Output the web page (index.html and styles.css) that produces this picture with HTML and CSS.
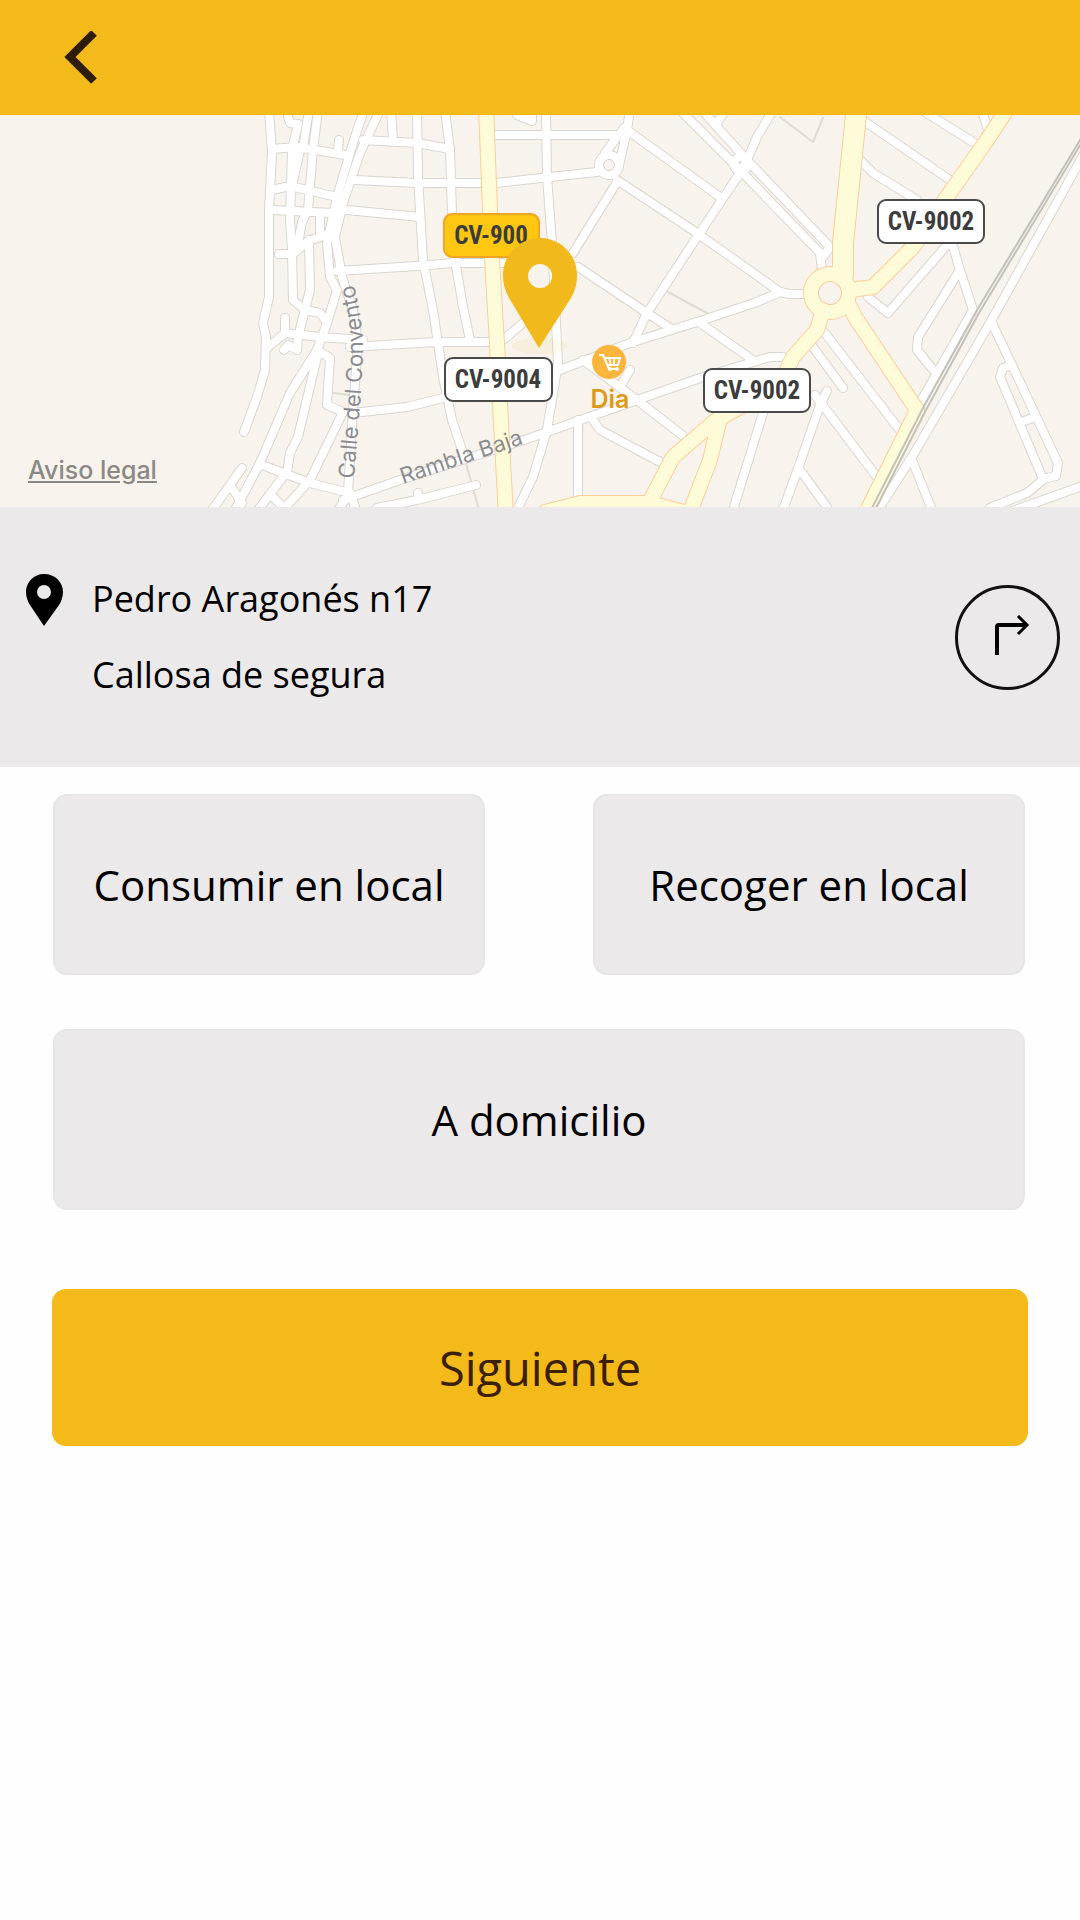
FILE: index.html
```html
<!DOCTYPE html>
<html lang="es">
<head>
<meta charset="utf-8">
<meta name="viewport" content="width=device-width, initial-scale=1">
<title>Pedido</title>
<link rel="stylesheet" href="styles.css">
</head>
<body>
<header class="topbar">
  <button class="back" type="button" aria-label="Volver">
    <svg width="34" height="54" viewBox="0 0 34 54"><path d="M30 2 6 26 30 50" fill="none" stroke="#2e1c05" stroke-width="8"/></svg>
  </button>
</header>
<main>
  <section class="map" aria-label="Mapa">
    <svg class="map-art" viewBox="0 115 1080 392" preserveAspectRatio="xMidYMid slice">
      <defs>
        <g id="streets">
          <path d="M269 110 272 153 269 210V297L263 323 266 337 265 370 257 397 244 432"/>
          <path d="M288 117 290 123 298 124 292 150 290 220 292 250 293 300 305 310 320 313 327 322"/>
          <path d="M309 110 303 148M318 110 313 150 308 210 302 222 298 243M300 150 291 190"/>
          <path d="M272 149 297 147 345 155M338 151 339 140M272 190 290 186 337 197M272 210 333 213M320 213V235"/>
          <path d="M332 233 308 241 293 254H279M309 240 310 290 298 337 297 350"/>
          <path d="M285 318V333M267 348 285 333 320 337 363 340M284 350 288 345 297 350"/>
          <path d="M364 110 353 143 337 197 327 243 330 277 337 290 327 323 317 350 290 393 260 463 235 510"/>
          <path d="M380 110 360 153 343 203 335 237 342 277 353 310 358 343 353 410 348 493"/>
          <path d="M317 357 298 437 290 453 287 473M320 352 330 358 327 405 343 412 310 480 283 510"/>
          <path d="M262 465 310 483 350 493 338 510M350 493 356 510M242 468 210 513M232 488 242 503M283 477 258 510M270 494 284 508"/>
          <path d="M353 413 407 407 447 397M350 347 437 342H497M503 340 523 323"/>
          <path d="M343 500 400 480 530 438 637 400 703 377 750 363 770 357H783"/>
          <path d="M377 508 417 500 476 485M418 493V499"/>
          <path d="M391 110 393 140M417 110 418 177 423 260 433 310 443 377 452 420 463 453"/>
          <path d="M445 110 450 150 452 213 455 260 463 307 470 340"/>
          <path d="M363 140 417 143 450 149M355 180 417 183H497L550 177 597 172M347 210 420 217M337 271 417 266 453 263H503"/>
          <path d="M493 135H627M517 115 532 121V116M546 110 547 177 552 243 558 363 547 430 533 477 517 510"/>
          <path d="M630 110 627 130 618 170M624 128 605 153M627 130 720 197M617 180 697 233 780 292 790 294H807"/>
          <circle cx="609" cy="165" r="10"/>
          <path d="M617 182 573 253M578 267 647 313 670 328"/>
          <path d="M773 110 757 137 747 160 740 173 697 237 647 313 633 343"/>
          <path d="M560 370 630 343 700 321 757 302 780 292M583 360 637 400 682 435M630 370 620 387"/>
          <path d="M593 420 600 430 660 462M578 420V500M700 323 753 360"/>
          <path d="M682 112 737 167 820 253 822 270M702 110 745 158 830 247 823 257M724 112 717 123"/>
          <circle cx="741" cy="164" r="7"/>
          <path d="M864 121 950 180M860 160 873 173 917 200M925 112 973 142M982 110 987 127"/>
          <path d="M868 297 888 313 947 245M952 243 960 270 973 310 920 403M958 273 918 337 917 350 935 372"/>
          <path d="M1085 152 990 323 912 457 878 510M992 323 1012 365 1058 463 1056 476 1043 479 1000 377 1003 368 1012 365M1022 422 1035 417"/>
          <path d="M1043 480 1027 493 990 508M1010 512 1085 485M912 460 932 510"/>
          <path d="M824 332 902 433M813 347 843 388M827 391 820 405 800 463 783 510M815 395 877 477M800 470 827 507M763 413 733 510"/>
        </g>
        <g id="avenues">
          <path d="M486 105 490 210 493 277 497 343 502 443 506 515"/>
          <path d="M823 310 817 330 793 357 780 385 715 421 673 457 648 505M720 418 710 460 690 512M545 512 580 503H650L695 515"/>
          <path d="M848 303 855 317 917 410 865 515"/>
          <path d="M850 290 873 287 913 247 947 197 987 140 1010 105"/>
          <circle cx="830" cy="293" r="19"/>
        </g>
        <path id="boulevard" d="M857 105 843 243V275"/>
        <g id="cart" fill="none" stroke="#fff" stroke-width="2">
          <path d="M599 355H603L609 369H618M604 358H620L618 365H607M609 358 611 365M614 358V365"/>
          <circle cx="610" cy="369" r="1"/><circle cx="617" cy="369" r="1"/>
        </g>
      </defs>
      <rect y="115" width="1080" height="392" fill="#f8f4ed"/>
      <path class="track" d="M463 453 479 510M780 117 813 142 823 118M668 292 707 313M333 393 350 395"/>
      <use href="#streets" class="street-edge"/>
      <use href="#streets" class="street"/>
      <use href="#avenues" class="avenue-edge"/>
      <use href="#boulevard" class="boulevard-edge"/>
      <use href="#avenues" class="avenue"/>
      <use href="#boulevard" class="boulevard"/>
      <path class="rail" d="M1082 137 977 310 923 408 871 510M1082 142 979 313 926 410 875 510"/>
      <ellipse cx="540" cy="346" rx="28" ry="8" fill="#f3ba19" opacity=".08"/>

      <path id="convento" d="M354 479C358 430 362 390 363 350 363 325 358 300 350 268" fill="none"/>
      <text class="street-name"><textPath href="#convento">Calle del Convento</textPath></text>
      <path id="rambla" d="M403 484 535 440" fill="none"/>
      <text class="street-name"><textPath href="#rambla">Rambla Baja</textPath></text>

      <rect x="444" y="214" width="95" height="43" rx="8" fill="#ffc70f" stroke="#eea528" stroke-width="2"/>
      <text class="shield" x="491" y="244">CV-900</text>
      <g fill="#fff" stroke="#4a4a4a" stroke-width="2">
        <rect x="445" y="358" width="107" height="43" rx="8"/>
        <rect x="704" y="369" width="106" height="43" rx="8"/>
        <rect x="878" y="200" width="106" height="43" rx="8"/>
      </g>
      <text class="shield" x="498" y="388">CV-9004</text>
      <text class="shield" x="757" y="399">CV-9002</text>
      <text class="shield" x="931" y="230">CV-9002</text>

      <path fill="#f1b91b" fill-rule="evenodd" d="M540 238C519 238 503 255 503 275 503 284 505 290 509 298L539 348 571 298C575 291 577 284 577 275 577 255 561 238 540 238ZM540 264A12 12 0 1 1 540 288 12 12 0 1 1 540 264Z"/>

      <circle cx="609" cy="362" r="17" fill="#fdb53c"/>
      <use href="#cart"/>
      <text class="shop" x="610" y="408">Dia</text>
    </svg>
    <a class="legal" href="#legal">Aviso legal</a>
  </section>

  <section class="place">
    <svg class="place-pin" width="37" height="53" viewBox="0 0 37 53"><path fill-rule="evenodd" d="M18 0C8 0 0 8 0 18 0 23 2 28 4 31L18 52 33 31C35 28 37 23 37 18 37 8 29 0 18 0ZM18 11A7 7 0 1 1 18 25 7 7 0 1 1 18 11Z"/></svg>
    <address class="place-text">Pedro Aragonés n17<br>Callosa de segura</address>
    <button class="route" type="button" aria-label="Cómo llegar">
      <svg width="44" height="44" viewBox="0 0 44 44"><path d="M11 40V12Q11 10 13 10H41" fill="none" stroke="#000" stroke-width="4"/><path d="M32 1 41 10 32 19" fill="none" stroke="#000" stroke-width="3"/></svg>
    </button>
  </section>

  <section class="options">
    <button class="option" type="button">Consumir en local</button>
    <button class="option" type="button">Recoger en local</button>
    <button class="option option-full" type="button">A domicilio</button>
  </section>
  <div class="actions">
    <button class="next" type="button">Siguiente</button>
  </div>
</main>
</body>
</html>
```
FILE: styles.css
```css
* { box-sizing: border-box; }

body {
  margin: 0;
  background: #fefefe;
  color: #000;
  font-family: "Open Sans", "Noto Sans", sans-serif;
}

button {
  margin: 0;
  padding: 0;
  border: 0;
  background: none;
  color: inherit;
  font: inherit;
  cursor: pointer;
}

svg { display: block; }

.topbar {
  display: flex;
  align-items: center;
  height: 115px;
  padding: 0 64px;
  background: #f3ba19;
}

.map {
  position: relative;
  background: #f8f4ed;
}

.map-art {
  width: 100%;
  height: 392px;
}

.street-edge, .street, .avenue-edge, .avenue,
.boulevard-edge, .boulevard, .track, .rail {
  fill: none;
  stroke-linecap: round;
  stroke-linejoin: round;
}

.street-edge { stroke: #d9d6d1; stroke-width: 10px; }
.street { stroke: #fff; stroke-width: 8px; }
.avenue-edge { stroke: #fbcf98; stroke-width: 16px; }
.avenue { stroke: #fefbd9; stroke-width: 14px; }
.boulevard-edge { stroke: #fbcf98; stroke-width: 22px; }
.boulevard { stroke: #fefbd9; stroke-width: 20px; }
.track { stroke: #dedbd0; stroke-width: 2px; }
.rail { stroke: #c3c1ba; stroke-width: 2px; }

.street-name {
  fill: #8c8c90;
  font: 22px Inter, sans-serif;
}

.shield {
  fill: #3c3c3c;
  font: bold 25px "Liberation Sans Narrow", "Roboto Condensed", Roboto, sans-serif;
  text-anchor: middle;
}

.shop {
  fill: #dc9a1b;
  font: 600 25px Inter, sans-serif;
  text-anchor: middle;
}

.legal {
  position: absolute;
  left: 28px;
  bottom: 22px;
  color: #8b8985;
  font: 500 25px/30px Inter, sans-serif;
}

.place {
  display: flex;
  align-items: center;
  height: 260px;
  padding: 0 20px 0 26px;
  background: #ebe9ea;
}

.place-pin {
  align-self: flex-start;
  margin-top: 67px;
}

.place-text {
  flex: 1;
  margin-left: 29px;
  font-size: 36px;
  font-style: normal;
  line-height: 76px;
}

.route {
  display: flex;
  align-items: center;
  justify-content: center;
  width: 105px;
  height: 105px;
  border: 3px solid #111;
  border-radius: 50%;
}

.options {
  display: grid;
  grid-template-columns: 1fr 1fr;
  gap: 54px 108px;
  padding: 27px 55px 0 53px;
}

.option {
  height: 181px;
  border: 2px solid #e7e6e7;
  border-radius: 14px;
  background: #ebe9ea;
  font-size: 42px;
}

.option-full { grid-column: 1 / -1; }

.actions { padding: 79px 52px; }

.next {
  width: 100%;
  height: 157px;
  border-radius: 14px;
  background: #f3ba19;
  color: #3b2006;
  font-size: 47px;
}
```
